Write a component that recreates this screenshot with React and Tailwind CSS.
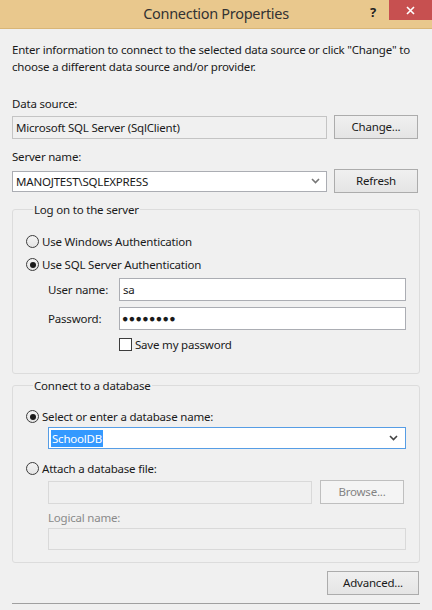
import React from "react";

const font = { fontFamily: '"Noto Sans", "Open Sans", sans-serif' };

function Button({ children, disabled, className = "" }) {
  return (
    <button
      className={`h-[24px] border text-[11.5px] leading-none tracking-[-0.2px] ${
        disabled
          ? "border-[#bfbfbf] bg-[#f4f4f4] text-[#838383]"
          : "border-[#acacac] bg-gradient-to-b from-[#f0f0f0] to-[#e5e5e5] text-[#1a1a1a]"
      } ${className}`}
    >
      {children}
    </button>
  );
}

function Radio({ checked }) {
  return (
    <span className="flex h-[13px] w-[13px] shrink-0 items-center justify-center rounded-full border border-[#3c3c3c] bg-gradient-to-b from-[#f4f4f4] to-[#e4e4e4]">
      {checked && <span className="h-[6px] w-[6px] rounded-full bg-[#1a1a1a]" />}
    </span>
  );
}

function Chevron({ className = "" }) {
  return (
    <svg width="9" height="6" viewBox="0 0 9 6" className={className}>
      <path d="M1 1 L4.5 4.5 L8 1" fill="none" stroke="currentColor" strokeWidth="1.6" />
    </svg>
  );
}

function GroupBox({ title, children, className = "" }) {
  return (
    <fieldset className={`rounded-[3px] border border-[#dcdcdc] px-[13px] ${className}`}>
      <legend className="ml-[7px] px-[1px] leading-[17px] text-[#1a1a1a]">{title}</legend>
      {children}
    </fieldset>
  );
}

export default function App() {
  return (
    <div className="h-[610px] w-[432px] overflow-hidden bg-[#f0f0f0] text-[#1a1a1a]" style={font}>
      {/* title bar */}
      <div className="relative flex h-[29px] items-center justify-center border-b border-[#d9b677] bg-[#e9c88d]">
        <span className="text-[14.5px] tracking-[-0.3px] text-[#333]">Connection Properties</span>
        <span className="absolute left-[370px] top-[3px] text-[13px] font-bold text-[#222]">?</span>
        <span className="absolute right-0 top-0 flex h-[20px] w-[43px] items-center justify-center bg-[#c75050]">
          <svg width="9" height="9" viewBox="0 0 9 9">
            <path d="M1 1 L8 8 M8 1 L1 8" stroke="white" strokeWidth="1.6" />
          </svg>
        </span>
      </div>

      <div className="px-[12px] text-[11.5px] leading-[17px] tracking-[-0.2px]">
        <p className="mt-[12px] whitespace-nowrap">
          Enter information to connect to the selected data source or click "Change" to
          <br />
          choose a different data source and/or provider.
        </p>

        <div className="mt-[20px]">Data source:</div>
        <div className="mt-[3px] flex items-center gap-[7px]">
          <div className="flex h-[23px] w-[315px] items-center border border-[#c4c4c4] bg-[#f0f0f0] px-[3px]">
            Microsoft SQL Server (SqlClient)
          </div>
          <Button className="w-[84px]">Change...</Button>
        </div>

        <div className="mt-[9px]">Server name:</div>
        <div className="mt-[4px] flex items-center gap-[7px]">
          <div className="flex h-[21px] w-[315px] items-center justify-between border border-[#abadb3] bg-white pl-[3px] pr-[6px]">
            <span>MANOJTEST\SQLEXPRESS</span>
            <Chevron className="text-[#777]" />
          </div>
          <Button className="w-[84px]">Refresh</Button>
        </div>

        <GroupBox title="Log on to the server" className="mt-[8px] pb-[20px]">
          <div className="mt-[15px] flex h-[17px] items-center gap-[3px]">
            <Radio />
            <span>Use Windows Authentication</span>
          </div>
          <div className="mt-[6px] flex h-[17px] items-center gap-[3px]">
            <Radio checked />
            <span>Use SQL Server Authentication</span>
          </div>
          <div className="ml-[22px] mt-[5px] flex items-center">
            <span className="w-[71px]">User name:</span>
            <div className="flex h-[23px] w-[287px] items-center border border-[#abadb3] bg-white px-[3px]">sa</div>
          </div>
          <div className="ml-[22px] mt-[6px] flex items-center">
            <span className="w-[71px]">Password:</span>
            <div className="flex h-[23px] w-[287px] items-center border border-[#abadb3] bg-white px-[2px] text-[10.5px] tracking-[0.4px]">
              ●●●●●●●●
            </div>
          </div>
          <div className="ml-[93px] mt-[6px] flex items-center gap-[3px]">
            <span className="h-[13px] w-[13px] border border-[#3c3c3c] bg-white" />
            <span>Save my password</span>
          </div>
        </GroupBox>

        <GroupBox title="Connect to a database" className="mt-[3px] pb-[12px]">
          <div className="mt-[14px] flex h-[17px] items-center gap-[3px]">
            <Radio checked />
            <span>Select or enter a database name:</span>
          </div>
          <div className="ml-[22px] mt-[2px] flex h-[22px] w-[358px] items-center justify-between border border-[#569de5] bg-white pl-[2px] pr-[7px]">
            <span className="bg-[#3399ff] px-[1px] text-white">SchoolDB</span>
            <Chevron className="text-[#444]" />
          </div>
          <div className="mt-[11px] flex h-[17px] items-center gap-[3px]">
            <Radio />
            <span>Attach a database file:</span>
          </div>
          <div className="ml-[22px] mt-[3px] flex items-center gap-[8px]">
            <div className="h-[23px] w-[264px] border border-[#d9d9d9] bg-[#f0f0f0]" />
            <Button disabled className="w-[84px]">Browse...</Button>
          </div>
          <div className="ml-[22px] mt-[5px] text-[#8a8a8a]">Logical name:</div>
          <div className="ml-[22px] mt-[2px] h-[22px] w-[358px] border border-[#d9d9d9] bg-[#f0f0f0]" />
        </GroupBox>

        <div className="mt-[8px] flex justify-end pr-[1px]">
          <Button className="w-[92px]">Advanced...</Button>
        </div>
        <div className="mt-[8px] h-[1px] bg-[#a0a0a0]" />
      </div>
    </div>
  );
}
